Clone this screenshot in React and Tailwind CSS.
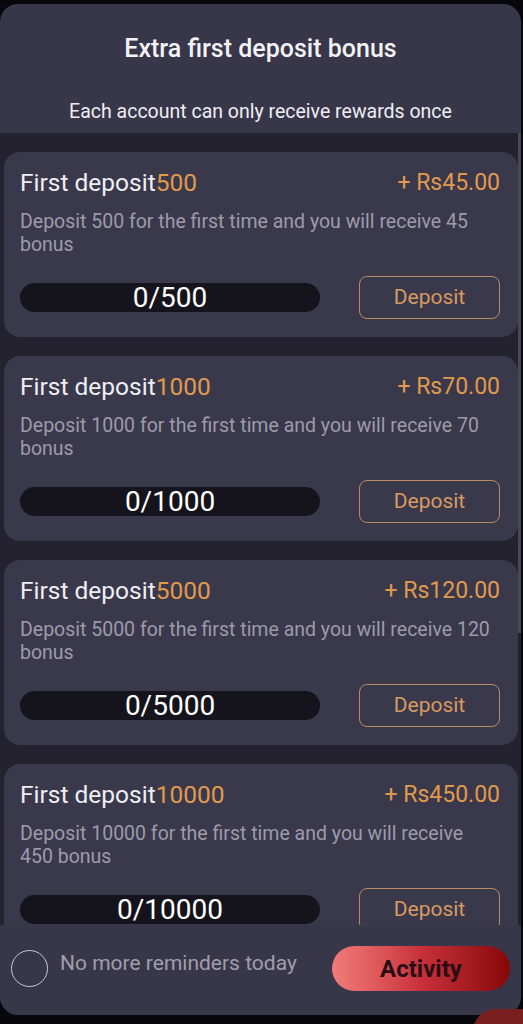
import { useState } from "react";

const bonuses = [
  { amount: 500, reward: "45.00", bonus: 45 },
  { amount: 1000, reward: "70.00", bonus: 70 },
  { amount: 5000, reward: "120.00", bonus: 120 },
  { amount: 10000, reward: "450.00", bonus: 450 },
];

function BonusCard({ item }) {
  return (
    <div className="rounded-[16px] bg-[#3a384b] pl-4 pr-[18px] pt-4 pb-[18px]">
      <div className="flex items-center justify-between h-[30px]">
        <p className="text-[24.5px] leading-[30px] text-[#eeeef3]">
          First deposit<span className="text-[#e09a4e]">{item.amount}</span>
        </p>
        <p className="text-[23px] leading-[30px] text-[#e09a4e]">
          + Rs{item.reward}
        </p>
      </div>
      <p className="mt-3 text-[19.5px] leading-[23px] text-[#9d9bab]">
        Deposit {item.amount} for the first time and you will receive{" "}
        {item.bonus} bonus
      </p>
      <div className="mt-5 flex items-center justify-between">
        <div className="w-[300px] h-[29px] rounded-full bg-[#15141c] flex items-center justify-center text-[28px] leading-[29px] text-white">
          0/{item.amount}
        </div>
        <button className="w-[141px] h-[43px] rounded-lg border-[1.5px] border-[#b98a62] text-[21px] text-[#d69a62]">
          Deposit
        </button>
      </div>
    </div>
  );
}

export default function App() {
  const [checked, setChecked] = useState(false);

  return (
    <div
      className="relative w-[523px] h-[1024px] bg-[#08080c] pt-1 overflow-hidden"
      style={{ fontFamily: "Roboto, 'Noto Sans', sans-serif" }}>
      <div className="w-[521px] h-[1011px] rounded-[18px] overflow-hidden flex flex-col bg-[#383649]">
        <div className="h-[129px] shrink-0 flex flex-col items-center">
          <h1 className="mt-[30px] text-[25px] leading-[30px] font-medium text-[#f2f2f7]">
            Extra first deposit bonus
          </h1>
          <p className="mt-[36px] text-[19.5px] leading-[24px] text-[#eeeef3]">
            Each account can only receive rewards once
          </p>
        </div>
        <div className="relative h-[792px] shrink-0 overflow-hidden bg-[#24222e]">
          <div className="flex flex-col gap-[19px] pl-1 pr-[3px] pt-[19px]">
            {bonuses.map((item) => (
              <BonusCard key={item.amount} item={item} />
            ))}
          </div>
          <div className="absolute right-0 top-0 w-[3px] h-[500px] bg-[#4a4858]" />
        </div>
        <div className="flex-1 flex items-center justify-between pl-[11px] pr-[11px] pb-[3px]">
          <div className="flex items-center gap-3">
            <button
              onClick={() => setChecked(!checked)}
              className="w-[37px] h-[37px] rounded-full border-[1.5px] border-[#c9c8d2]"
            />
            <span className="text-[21px] text-[#a09eae] -mt-[10px]">
              No more reminders today
            </span>
          </div>
          <button className="w-[178px] h-[45px] rounded-full bg-gradient-to-r from-[#f27b7b] via-[#c8303a] to-[#880606] text-[24px] font-bold text-[#2b0d14]">
            Activity
          </button>
        </div>
      </div>
      <div className="absolute right-[-20px] bottom-[-30px] w-[70px] h-[45px] rounded-full bg-[#7a1f1f]" />
    </div>
  );
}
